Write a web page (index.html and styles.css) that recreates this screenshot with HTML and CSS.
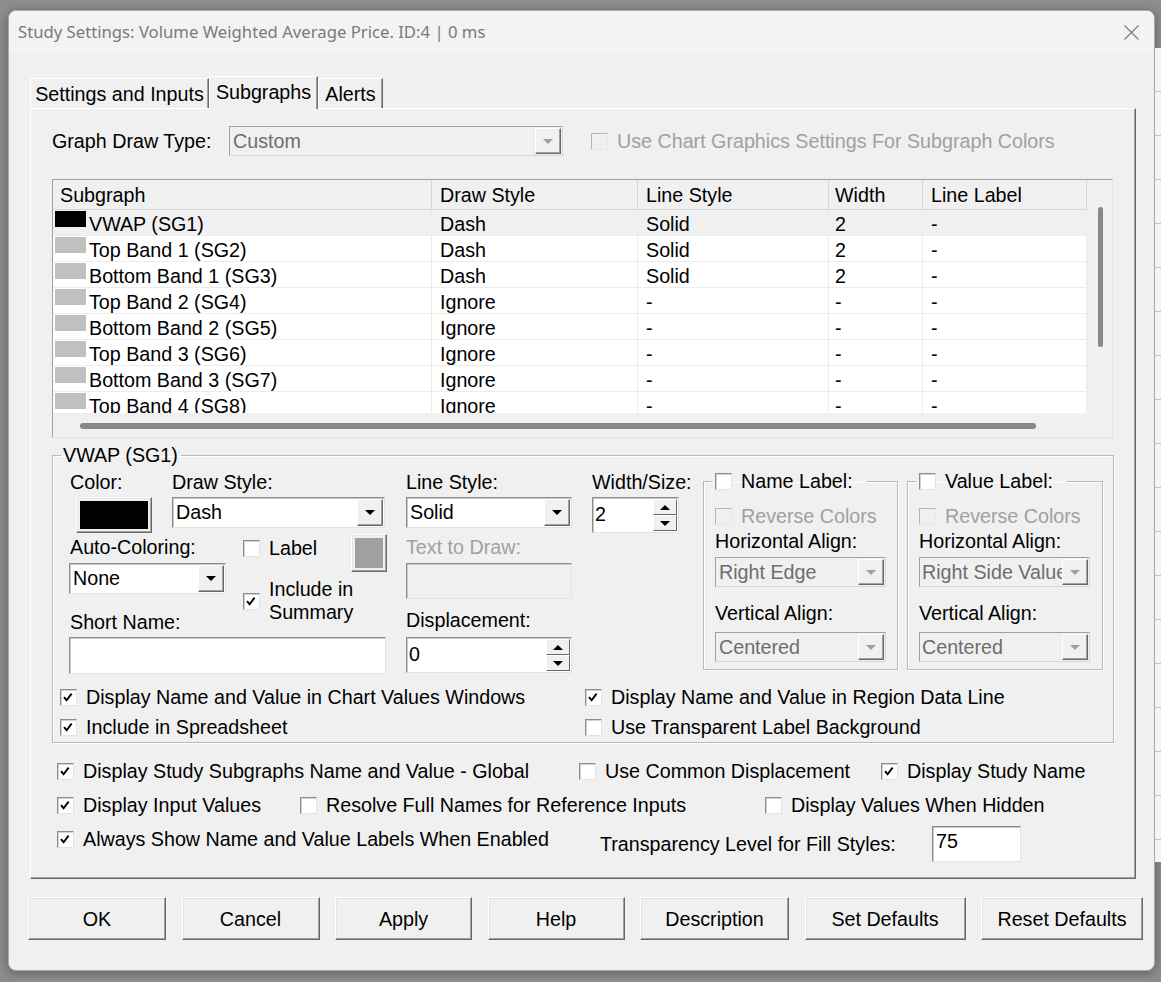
FILE: index.html
```html
<!DOCTYPE html>
<html lang="en">
<head>
    <meta charset="UTF-8">
    <title>Study Settings</title>
    <link rel="stylesheet" href="styles.css">
</head>
<body>
<div class="desk-strip"></div>

<div class="window">
    <div class="titlebar">
        <span class="title">Study Settings: Volume Weighted Average Price. ID:4 | 0 ms</span>
        <svg class="close" viewBox="0 0 15 15"><path d="M0.5 0.5L14.5 14.5M14.5 0.5L0.5 14.5" stroke="#7a7a7a" stroke-width="1.1"/></svg>
    </div>

    <div class="body">
        <div class="tabs">
            <div class="tab t1">Settings and Inputs</div>
            <div class="tab t2 active">Subgraphs</div>
            <div class="tab t3">Alerts</div>
        </div>

        <div class="panel">
            <div class="draw-type">
                <span class="draw-type-label">Graph Draw Type:</span>
                <div class="combo disabled draw-type-combo"><span class="val">Custom</span><i class="drop"></i></div>
                <label class="check muted chart-colors"><i class="cb off"></i>Use Chart Graphics Settings For Subgraph Colors</label>
            </div>

            <!-- subgraph list -->
            <div class="grid">
                <div class="grid-main">
                    <div class="grid-head">
                        <div class="c c1">Subgraph</div>
                        <div class="c c2">Draw Style</div>
                        <div class="c c3">Line Style</div>
                        <div class="c c4">Width</div>
                        <div class="c c5">Line Label</div>
                    </div>
                    <div class="grid-rows">
                        <div class="row sel">
                            <div class="c c1"><i class="sw black"></i>VWAP (SG1)</div>
                            <div class="c c2">Dash</div><div class="c c3">Solid</div><div class="c c4">2</div><div class="c c5">-</div>
                        </div>
                        <div class="row">
                            <div class="c c1"><i class="sw"></i>Top Band 1 (SG2)</div>
                            <div class="c c2">Dash</div><div class="c c3">Solid</div><div class="c c4">2</div><div class="c c5">-</div>
                        </div>
                        <div class="row">
                            <div class="c c1"><i class="sw"></i>Bottom Band 1 (SG3)</div>
                            <div class="c c2">Dash</div><div class="c c3">Solid</div><div class="c c4">2</div><div class="c c5">-</div>
                        </div>
                        <div class="row">
                            <div class="c c1"><i class="sw"></i>Top Band 2 (SG4)</div>
                            <div class="c c2">Ignore</div><div class="c c3">-</div><div class="c c4">-</div><div class="c c5">-</div>
                        </div>
                        <div class="row">
                            <div class="c c1"><i class="sw"></i>Bottom Band 2 (SG5)</div>
                            <div class="c c2">Ignore</div><div class="c c3">-</div><div class="c c4">-</div><div class="c c5">-</div>
                        </div>
                        <div class="row">
                            <div class="c c1"><i class="sw"></i>Top Band 3 (SG6)</div>
                            <div class="c c2">Ignore</div><div class="c c3">-</div><div class="c c4">-</div><div class="c c5">-</div>
                        </div>
                        <div class="row">
                            <div class="c c1"><i class="sw"></i>Bottom Band 3 (SG7)</div>
                            <div class="c c2">Ignore</div><div class="c c3">-</div><div class="c c4">-</div><div class="c c5">-</div>
                        </div>
                        <div class="row">
                            <div class="c c1"><i class="sw"></i>Top Band 4 (SG8)</div>
                            <div class="c c2">Ignore</div><div class="c c3">-</div><div class="c c4">-</div><div class="c c5">-</div>
                        </div>
                    </div>
                    <div class="hscroll"><i class="thumb"></i></div>
                </div>
                <div class="vscroll"><i class="thumb"></i></div>
            </div>

            <!-- selected subgraph -->
            <fieldset class="group">
                <legend>VWAP (SG1)</legend>
                <div class="group-top">
                    <div class="col-left">
                        <div class="pair">
                            <div class="f-color">
                                <div class="lbl color-lbl">Color:</div>
                                <div class="color-btn"><i class="fill-black"></i></div>
                            </div>
                            <div class="f-draw">
                                <div class="lbl">Draw Style:</div>
                                <div class="combo"><span class="val">Dash</span><i class="drop"></i></div>
                            </div>
                        </div>
                        <div class="pair">
                            <div class="f-auto">
                                <div class="lbl auto-lbl">Auto-Coloring:</div>
                                <div class="combo auto-combo"><span class="val">None</span><i class="drop"></i></div>
                                <div class="lbl short-lbl">Short Name:</div>
                            </div>
                            <div class="f-opts">
                                <div class="label-row">
                                    <label class="check label-check"><i class="cb"></i>Label</label>
                                    <div class="color-btn swatch-btn"><i class="fill-gray"></i></div>
                                </div>
                                <label class="check include"><i class="cb on"><svg viewBox="0 0 15 15"><path d="M3 7.2L5.6 10.2L10.6 3.6" fill="none" stroke="#000" stroke-width="1.9"/></svg></i><span>Include in<br>Summary</span></label>
                            </div>
                        </div>
                        <div class="input short-input"></div>
                    </div>

                    <div class="col-line">
                        <div class="lbl">Line Style:</div>
                        <div class="combo"><span class="val">Solid</span><i class="drop"></i></div>
                        <div class="lbl muted text-lbl">Text to Draw:</div>
                        <div class="input disabled text-input"></div>
                        <div class="lbl disp-lbl">Displacement:</div>
                        <div class="spin disp-spin"><span class="val">0</span><span class="btns"><i class="up"></i><i class="down"></i></span></div>
                    </div>

                    <div class="col-width">
                        <div class="lbl">Width/Size:</div>
                        <div class="spin width-spin"><span class="val">2</span><span class="btns"><i class="up"></i><i class="down"></i></span></div>
                    </div>

                    <fieldset class="sub sub-name">
                        <legend><i class="cb"></i>Name Label:</legend>
                        <label class="check muted rev"><i class="cb off"></i>Reverse Colors</label>
                        <div class="lbl h-lbl">Horizontal Align:</div>
                        <div class="combo disabled sub-combo"><span class="val">Right Edge</span><i class="drop"></i></div>
                        <div class="lbl v-lbl">Vertical Align:</div>
                        <div class="combo disabled sub-combo v-combo"><span class="val">Centered</span><i class="drop"></i></div>
                    </fieldset>

                    <fieldset class="sub sub-value">
                        <legend><i class="cb"></i>Value Label:</legend>
                        <label class="check muted rev"><i class="cb off"></i>Reverse Colors</label>
                        <div class="lbl h-lbl">Horizontal Align:</div>
                        <div class="combo disabled sub-combo"><span class="val">Right Side Value</span><i class="drop"></i></div>
                        <div class="lbl v-lbl">Vertical Align:</div>
                        <div class="combo disabled sub-combo v-combo"><span class="val">Centered</span><i class="drop"></i></div>
                    </fieldset>
                </div>

                <div class="group-checks">
                    <label class="check"><i class="cb on"><svg viewBox="0 0 15 15"><path d="M3 7.2L5.6 10.2L10.6 3.6" fill="none" stroke="#000" stroke-width="1.9"/></svg></i>Display Name and Value in Chart Values Windows</label>
                    <label class="check"><i class="cb on"><svg viewBox="0 0 15 15"><path d="M3 7.2L5.6 10.2L10.6 3.6" fill="none" stroke="#000" stroke-width="1.9"/></svg></i>Display Name and Value in Region Data Line</label>
                    <label class="check"><i class="cb on"><svg viewBox="0 0 15 15"><path d="M3 7.2L5.6 10.2L10.6 3.6" fill="none" stroke="#000" stroke-width="1.9"/></svg></i>Include in Spreadsheet</label>
                    <label class="check"><i class="cb"></i>Use Transparent Label Background</label>
                </div>
            </fieldset>

            <!-- study-wide options -->
            <div class="global">
                <div class="grow g1">
                    <label class="check w522"><i class="cb on"><svg viewBox="0 0 15 15"><path d="M3 7.2L5.6 10.2L10.6 3.6" fill="none" stroke="#000" stroke-width="1.9"/></svg></i>Display Study Subgraphs Name and Value - Global</label>
                    <label class="check w302"><i class="cb"></i>Use Common Displacement</label>
                    <label class="check"><i class="cb on"><svg viewBox="0 0 15 15"><path d="M3 7.2L5.6 10.2L10.6 3.6" fill="none" stroke="#000" stroke-width="1.9"/></svg></i>Display Study Name</label>
                </div>
                <div class="grow g2">
                    <label class="check w243"><i class="cb on"><svg viewBox="0 0 15 15"><path d="M3 7.2L5.6 10.2L10.6 3.6" fill="none" stroke="#000" stroke-width="1.9"/></svg></i>Display Input Values</label>
                    <label class="check w465"><i class="cb"></i>Resolve Full Names for Reference Inputs</label>
                    <label class="check"><i class="cb"></i>Display Values When Hidden</label>
                </div>
                <div class="grow g3">
                    <label class="check w543"><i class="cb on"><svg viewBox="0 0 15 15"><path d="M3 7.2L5.6 10.2L10.6 3.6" fill="none" stroke="#000" stroke-width="1.9"/></svg></i>Always Show Name and Value Labels When Enabled</label>
                    <span class="transp-lbl">Transparency Level for Fill Styles:</span>
                    <div class="input transp-input">75</div>
                </div>
            </div>
        </div>

        <div class="buttons">
            <button class="b-ok">OK</button>
            <button class="b-cancel">Cancel</button>
            <button class="b-apply">Apply</button>
            <button class="b-help">Help</button>
            <button class="b-desc">Description</button>
            <button class="b-set">Set Defaults</button>
            <button class="b-reset">Reset Defaults</button>
        </div>
    </div>
</div>
</body>
</html>
```

FILE: styles.css
```css
* {
    box-sizing: border-box;
}

body {
    margin: 0;
    width: 1161px;
    height: 982px;
    overflow: hidden;
    position: relative;
    background: #8e8e8e;
    font-family: "Liberation Sans", Arial, sans-serif;
    font-size: 19.7px;
    line-height: 22px;
    color: #000;
}

/* bit of the chart window showing behind the dialog */
.desk-strip {
    position: absolute;
    right: 0;
    top: 48px;
    width: 6px;
    height: 814px;
    background: repeating-linear-gradient(#f4f4f4 0 43px, #c4c4c4 43px 44px);
}

.window {
    width: 1147px;
    height: 961px;
    margin: 10px 0 0 8px;
    background: #f0f0f0;
    border: 1px solid #a8a8a8;
    border-radius: 8px;
    box-shadow: 0 2px 12px rgba(0, 0, 0, .35);
    overflow: hidden;
}

.titlebar {
    height: 42px;
    background: #f3f3f3;
    display: flex;
    align-items: center;
    justify-content: space-between;
    padding: 0 15px 0 9px;
}

.title {
    font-family: "Noto Sans", sans-serif;
    font-size: 16.7px;
    color: #7a7a7a;
}

.close {
    width: 15px;
    height: 15px;
}

.body {
    padding: 23px 0 0 21px;
}

/* tabs */
.tabs {
    display: flex;
    align-items: flex-end;
    height: 32px;
}

.tab {
    height: 30px;
    line-height: 30px;
    text-align: center;
    border-top: 1px solid #fff;
    border-left: 1px solid #fff;
    border-right: 1px solid #696969;
    box-shadow: inset -1px 0 #a0a0a0;
}

.tab.active {
    height: 33px;
    margin-bottom: -1px;
    position: relative;
    z-index: 1;
    background: #f0f0f0;
}

.t1 { width: 179px; }
.t2 { width: 109px; }
.t3 { width: 65px; }

.panel {
    width: 1106px;
    border: 1px solid;
    border-color: #fff #696969 #696969 #fff;
    box-shadow: inset -1px -1px #a0a0a0;
    padding: 17px 22px 16px 21px;
}

/* common controls */
.lbl {
    height: 22px;
    white-space: nowrap;
}

.muted {
    color: #a0a0a0;
}

.check {
    display: flex;
    align-items: center;
    height: 22px;
    white-space: nowrap;
}

.cb {
    flex: none;
    width: 17px;
    height: 17px;
    margin-right: 9px;
    background: #fff;
    border: 1px solid;
    border-color: #8c8c8c #e3e3e3 #e3e3e3 #8c8c8c;
    box-shadow: inset 1px 1px #d2d2d2;
}

.cb svg {
    display: block;
    width: 15px;
    height: 15px;
}

.cb.off {
    background: #f0f0f0;
    border-color: #b4b4b4 #e8e8e8 #e8e8e8 #b4b4b4;
    box-shadow: none;
}

.combo,
.input,
.spin {
    background: #fff;
    border: 1px solid;
    border-color: #8c8c8c #e3e3e3 #e3e3e3 #8c8c8c;
    box-shadow: inset 1px 1px #c8c8c8;
}

.combo {
    display: flex;
    align-items: stretch;
    height: 31px;
}

.combo .val,
.spin .val {
    flex: 1;
    padding-left: 3px;
    line-height: 29px;
    white-space: nowrap;
    overflow: hidden;
}

.combo.disabled {
    background: #f0f0f0;
    color: #6d6d6d;
}

.drop {
    flex: none;
    width: 26px;
    margin: 1px 1px 1px 0;
    background: #f0f0f0;
    border: 1px solid;
    border-color: #fff #696969 #696969 #fff;
    box-shadow: inset -1px -1px #a0a0a0;
    display: flex;
    align-items: center;
    justify-content: center;
}

.drop::after {
    content: "";
    border-left: 5px solid transparent;
    border-right: 5px solid transparent;
    border-top: 5px solid #000;
}

.disabled .drop::after {
    border-top-color: #a0a0a0;
}

.input.disabled {
    background: #f0f0f0;
}

.spin {
    display: flex;
    height: 36px;
}

.spin .val {
    padding-left: 2px;
    line-height: 32px;
}

.btns {
    width: 25px;
    display: flex;
    flex-direction: column;
    padding: 1px 1px 1px 0;
}

.btns i {
    flex: 1;
    background: #f0f0f0;
    border: 1px solid;
    border-color: #fff #696969 #696969 #fff;
    display: flex;
    align-items: center;
    justify-content: center;
}

.btns .up::after {
    content: "";
    border-left: 5px solid transparent;
    border-right: 5px solid transparent;
    border-bottom: 5px solid #000;
}

.btns .down::after {
    content: "";
    border-left: 5px solid transparent;
    border-right: 5px solid transparent;
    border-top: 5px solid #000;
}

.color-btn {
    border: 1px solid;
    border-color: #fff #696969 #696969 #fff;
    box-shadow: inset -1px -1px #a0a0a0, inset 1px 1px #e3e3e3;
    padding: 3px 3px 3px 3px;
    display: flex;
}

.color-btn i {
    flex: 1;
}

.fill-black { background: #000; }
.fill-gray { background: #a0a0a0; }

/* graph draw type row */
.draw-type {
    display: flex;
    align-items: center;
    height: 30px;
}

.draw-type-label {
    width: 177px;
}

.draw-type-combo {
    width: 334px;
    height: 30px;
    border-color: #a0a0a0 #d8d8d8 #d8d8d8 #a0a0a0;
    box-shadow: none;
}

.chart-colors {
    margin-left: 28px;
}

/* subgraph grid */
.grid {
    display: flex;
    width: 1061px;
    height: 259px;
    margin-top: 23px;
    border: 1px solid;
    border-color: #a0a0a0 #e3e3e3 #e3e3e3 #a0a0a0;
    background: #f0f0f0;
}

.grid-main {
    width: 1034px;
    display: flex;
    flex-direction: column;
}

.grid-head,
.row {
    display: flex;
}

.grid-head {
    height: 30px;
    border-bottom: 1px solid #d6d6d6;
    line-height: 30px;
}

.grid-head .c {
    border-right: 1px solid #d6d6d6;
}

.c {
    flex: none;
    padding-left: 8px;
    white-space: nowrap;
    overflow: hidden;
}

.c1 { width: 379px; padding-left: 7px; }
.c2 { width: 206px; }
.c3 { width: 191px; }
.c4 { width: 94px; padding-left: 6px; }
.c5 { width: 164px; }

.grid-rows {
    height: 203px;
    overflow: hidden;
    background: #fff;
}

.row {
    height: 26px;
    border-bottom: 1px solid #ececec;
    line-height: 28px;
    background: #fff;
}

.row.sel {
    background: #f0f0f0;
}

.row .c {
    border-right: 1px solid #ececec;
}

.row .c1 {
    display: flex;
    align-items: flex-start;
    padding-left: 2px;
}

.sw {
    flex: none;
    width: 31px;
    height: 16px;
    margin: 1px 3px 0 0;
    background: #c0c0c0;
}

.sw.black {
    background: #000;
}

.hscroll {
    height: 24px;
    padding: 10px 0 0 27px;
}

.hscroll .thumb {
    display: block;
    width: 956px;
    height: 6px;
    border-radius: 3px;
    background: #878787;
}

.vscroll {
    width: 25px;
    padding: 27px 0 0 11px;
}

.vscroll .thumb {
    display: block;
    width: 5px;
    height: 140px;
    border-radius: 3px;
    background: #878787;
}

/* group boxes */
fieldset {
    margin: 0;
    min-width: 0;
    border: 1px solid #b9b9b9;
    box-shadow: 1px 1px 0 #fff, inset 1px 1px 0 #fff;
}

legend {
    height: 22px;
    line-height: 22px;
}

.group {
    width: 1062px;
    margin-top: 6px;
    padding: 0 10px 4px 16px;
}

.group > legend {
    margin-left: -8px;
    padding: 0 3px 0 2px;
}

.group-top {
    display: flex;
    align-items: flex-start;
    margin-top: 5px;
}

.col-left {
    width: 318px;
    margin-right: 19px;
}

.pair {
    display: flex;
    align-items: flex-start;
}

.f-color {
    width: 103px;
}

.color-lbl {
    margin-left: 1px;
}

.f-color .color-btn {
    width: 76px;
    height: 36px;
    margin: 4px 0 0 7px;
}

.f-draw {
    width: 213px;
}

.f-draw .combo {
    margin-top: 4px;
}

.f-auto {
    width: 174px;
}

.auto-lbl {
    margin-top: 3px;
    margin-left: 1px;
}

.auto-combo {
    width: 157px;
    margin-top: 5px;
}

.short-lbl {
    margin-top: 17px;
    margin-left: 1px;
}

.f-opts {
    width: 144px;
}

.label-row {
    display: flex;
    justify-content: space-between;
    align-items: flex-start;
}

.label-check {
    margin-top: 4px;
}

.swatch-btn {
    width: 36px;
    height: 38px;
    margin-top: 1px;
}

.include {
    height: auto;
    margin-top: 6px;
    line-height: 23px;
}

.short-input {
    width: 317px;
    height: 37px;
    margin-top: 4px;
}

.col-line {
    width: 166px;
    margin-right: 20px;
}

.col-line .combo {
    margin-top: 4px;
}

.text-lbl {
    margin-top: 8px;
}

.text-input {
    height: 36px;
    margin-top: 5px;
}

.disp-lbl {
    margin-top: 10px;
}

.disp-spin {
    margin-top: 6px;
}

.col-width {
    width: 87px;
    margin-right: 24px;
}

.width-spin {
    margin-top: 4px;
}

.sub {
    margin-top: -1px;
    padding: 0 11px 7px 11px;
}

.sub > legend {
    display: flex;
    align-items: center;
    margin-left: -2px;
    padding: 0 14px 0 2px;
}

.sub-name {
    width: 195px;
    margin-right: 9px;
}

.sub-value {
    width: 196px;
    padding-right: 12px;
}

.rev {
    margin-top: 13px;
}

.h-lbl {
    margin-top: 3px;
}

.sub-combo {
    height: 30px;
    margin-top: 5px;
    border-color: #a0a0a0 #d8d8d8 #d8d8d8 #a0a0a0;
    box-shadow: none;
}

.v-lbl {
    margin-top: 15px;
}

.v-combo {
    margin-top: 8px;
}

.sub-value .sub-combo .val {
    padding-left: 2px;
}

.group-checks {
    display: grid;
    grid-template-columns: 525px auto;
    row-gap: 8px;
    margin: 12px 0 0 -9px;
}

/* study-wide options */
.global {
    padding-left: 5px;
}

.grow {
    display: flex;
}

.g1 { margin-top: 17px; }
.g2 { margin-top: 12px; }
.g3 { margin-top: 10px; height: 36px; align-items: flex-start; }

.w522 { width: 522px; }
.w302 { width: 302px; }
.w243 { width: 243px; }
.w465 { width: 465px; }
.w543 { width: 543px; margin-top: 2px; }

.transp-lbl {
    width: 332px;
    margin-top: 7px;
}

.transp-input {
    width: 89px;
    height: 36px;
    padding: 2px 0 0 3px;
    line-height: 24px;
}

/* dialog buttons */
.buttons {
    display: flex;
    justify-content: space-between;
    width: 1115px;
    margin: 18px 0 0 -2px;
}

button {
    height: 43px;
    padding: 0;
    font: inherit;
    color: #000;
    background: #f0f0f0;
    border: 1px solid;
    border-color: #fff #696969 #696969 #fff;
    box-shadow: inset -1px -1px #a0a0a0, inset 1px 1px #e3e3e3;
}

.b-ok { width: 138px; }
.b-cancel { width: 138px; }
.b-apply { width: 137px; }
.b-help { width: 137px; }
.b-desc { width: 149px; }
.b-set { width: 161px; }
.b-reset { width: 162px; }
```
